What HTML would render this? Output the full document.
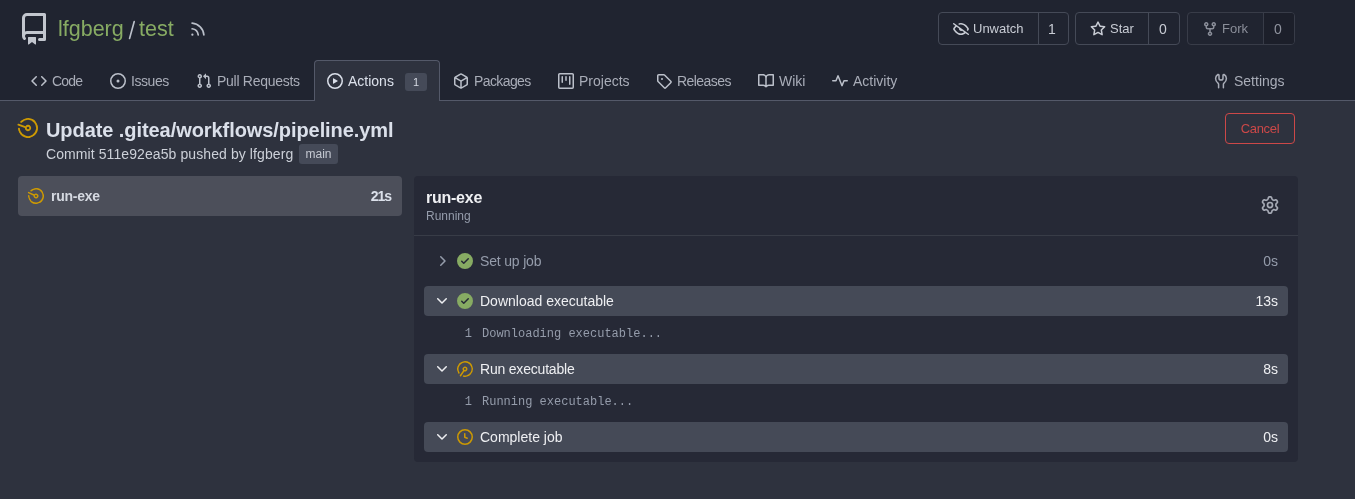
<!DOCTYPE html>
<html>
<head>
<meta charset="utf-8">
<style>
*{box-sizing:border-box;margin:0;padding:0}
html,body{width:1355px;height:499px;overflow:hidden;background:#2e323e;font-family:"Liberation Sans",sans-serif;color:#bbc0ca}
.abs{position:absolute}
.t{position:absolute;white-space:nowrap;line-height:20px;will-change:transform}
svg{position:absolute;display:block}
#hdr{position:absolute;left:0;top:0;width:1355px;height:101px;background:#202430;border-bottom:1px solid #545969}
.btn{position:absolute;border:1px solid #454a57;border-radius:4px;background:#202430}
.btn .div{position:absolute;top:0;bottom:0;width:1px;background:#454a57}
.tab{color:#a9adb8;font-size:14px}
.step{position:absolute;left:424px;width:864px;height:30px;border-radius:4px}
.step.sel{background:#454a57}
.mono{font-family:"Liberation Mono",monospace;font-size:12px;color:#959cab}
</style>
</head>
<body>
<div id="hdr"></div>

<!-- repo icon -->
<svg style="left:18px;top:13px" width="32" height="32" viewBox="0 0 16 16" fill="#c2c6ce"><path d="M2 2.5A2.5 2.5 0 0 1 4.5 0h8.75a.75.75 0 0 1 .75.75v12.5a.75.75 0 0 1-.75.75h-2.5a.75.75 0 0 1 0-1.5h1.75v-2h-8a1 1 0 0 0-.714 1.7.75.75 0 1 1-1.072 1.05A2.495 2.495 0 0 1 2 11.5Zm10.5-1h-8a1 1 0 0 0-1 1v6.708A2.486 2.486 0 0 1 4.5 9h8ZM5 12.25a.25.25 0 0 1 .25-.25h3.5a.25.25 0 0 1 .25.25v3.25a.25.25 0 0 1-.4.2l-1.45-1.087a.249.249 0 0 0-.3 0L5.4 15.7a.25.25 0 0 1-.4-.2Z"/></svg>
<div class="t" style="left:58px;top:17px;font-size:21.5px;line-height:24px;color:#87ab63">lfgberg</div>
<svg style="left:125px;top:18px" width="14" height="24"><line x1="4.6" y1="20.4" x2="9.2" y2="3.6" stroke="#bbc0ca" stroke-width="1.7" stroke-linecap="round"/></svg>
<div class="t" style="left:139px;top:17px;font-size:21.5px;line-height:24px;color:#87ab63">test</div>
<svg style="left:189px;top:20px" width="18" height="18" viewBox="0 0 16 16" fill="#bbc0ca"><path d="M2.002 2.725a.75.75 0 0 1 .797-.699C8.79 2.42 13.58 7.21 13.974 13.201a.75.75 0 0 1-1.497.098 10.502 10.502 0 0 0-9.776-9.776.747.747 0 0 1-.7-.798ZM2.84 7.05h-.002a7.002 7.002 0 0 1 6.113 6.111.75.75 0 0 1-1.49.178 5.503 5.503 0 0 0-4.8-4.8.75.75 0 0 1 .179-1.489ZM2 13a1 1 0 1 1 2 0 1 1 0 0 1-2 0Z"/></svg>

<!-- watch/star/fork -->
<div class="btn" style="left:938px;top:12px;width:131px;height:33px"><div class="div" style="left:99px"></div></div>
<svg style="left:953px;top:21px" width="16" height="16" viewBox="0 0 16 16" fill="#c8ccd4"><path d="M.143 2.31a.75.75 0 0 1 1.047-.167l14.5 10.5a.75.75 0 1 1-.88 1.214l-2.248-1.628C11.346 13.19 9.792 14 8 14c-1.981 0-3.67-.992-4.933-2.078C1.797 10.832.88 9.577.43 8.9a1.619 1.619 0 0 1 0-1.797c.353-.533.995-1.42 1.868-2.305L.31 3.357A.75.75 0 0 1 .143 2.31Zm1.536 5.622A.12.12 0 0 0 1.657 8c0 .021.006.045.022.068.412.621 1.242 1.75 2.366 2.717C5.175 11.758 6.527 12.5 8 12.5c1.195 0 2.31-.488 3.29-1.191L9.063 9.695A2 2 0 0 1 6.058 7.52L3.529 5.688a14.207 14.207 0 0 0-1.85 2.244ZM8 3.5c-.516 0-1.017.09-1.499.251a.75.75 0 1 1-.473-1.423A6.207 6.207 0 0 1 8 2c1.981 0 3.67.992 4.933 2.078 1.27 1.091 2.187 2.345 2.637 3.023a1.62 1.62 0 0 1 0 1.798c-.11.166-.248.365-.41.587a.75.75 0 1 1-1.21-.887c.148-.201.272-.382.371-.53a.119.119 0 0 0 0-.137c-.412-.621-1.242-1.75-2.366-2.717C10.825 4.242 9.473 3.5 8 3.5Z"/></svg>
<div class="t" style="left:973px;top:19px;font-size:13px;color:#c8ccd4">Unwatch</div>
<div class="t" style="left:1047.5px;top:18.5px;font-size:14px;color:#c8ccd4">1</div>

<div class="btn" style="left:1075px;top:12px;width:105px;height:33px"><div class="div" style="left:72px"></div></div>
<svg style="left:1090px;top:21px" width="16" height="16" viewBox="0 0 16 16" fill="#c8ccd4"><path d="M8 .25a.75.75 0 0 1 .673.418l1.882 3.815 4.21.612a.75.75 0 0 1 .416 1.279l-3.046 2.97.719 4.192a.751.751 0 0 1-1.088.791L8 12.347l-3.766 1.98a.75.75 0 0 1-1.088-.79l.72-4.194L.818 6.374a.75.75 0 0 1 .416-1.28l4.21-.611L7.327.668A.75.75 0 0 1 8 .25Zm0 2.445L6.615 5.5a.75.75 0 0 1-.564.41l-3.097.45 2.24 2.184a.75.75 0 0 1 .216.664l-.528 3.084 2.769-1.456a.75.75 0 0 1 .698 0l2.77 1.456-.53-3.084a.75.75 0 0 1 .216-.664l2.24-2.183-3.096-.45a.75.75 0 0 1-.564-.41L8 2.694Z"/></svg>
<div class="t" style="left:1110px;top:19px;font-size:13px;color:#c8ccd4">Star</div>
<div class="t" style="left:1159px;top:18.5px;font-size:14px;color:#c8ccd4">0</div>

<div class="btn" style="left:1187px;top:12px;width:108px;height:33px;border-color:#383c48"><div class="abs" style="left:75px;top:0;right:0;bottom:0;background:#1c1f2a;border-radius:0 3px 3px 0"></div><div class="div" style="left:75px;background:#383c48"></div></div>
<svg style="left:1202px;top:21px" width="16" height="16" viewBox="0 0 16 16" fill="#8a8e99"><path d="M5 5.372v.878c0 .414.336.75.75.75h4.5a.75.75 0 0 0 .75-.75v-.878a2.25 2.25 0 1 1 1.5 0v.878a2.25 2.25 0 0 1-2.25 2.25h-1.5v2.128a2.251 2.251 0 1 1-1.5 0V8.5h-1.5A2.25 2.25 0 0 1 3.5 6.25v-.878a2.25 2.25 0 1 1 1.5 0ZM5 3.25a.75.75 0 1 0-1.5 0 .75.75 0 0 0 1.5 0Zm6.75.75a.75.75 0 1 0 0-1.5.75.75 0 0 0 0 1.5Zm-3 8.75a.75.75 0 1 0-1.5 0 .75.75 0 0 0 1.5 0Z"/></svg>
<div class="t" style="left:1222px;top:19px;font-size:13px;color:#8a8e99">Fork</div>
<div class="t" style="left:1274px;top:18.5px;font-size:14px;color:#8f939e">0</div>

<!-- tabs -->
<div class="abs" style="left:314px;top:60px;width:126px;height:41px;background:#2e323e;border:1px solid #545969;border-bottom:none;border-radius:4px 4px 0 0"></div>

<svg style="left:31px;top:73px" width="16" height="16" viewBox="0 0 16 16" fill="#bbc0ca"><path d="m11.28 3.22 4.25 4.25a.75.75 0 0 1 0 1.06l-4.25 4.25a.749.749 0 0 1-1.275-.326.749.749 0 0 1 .215-.734L13.94 8l-3.72-3.72a.749.749 0 0 1 .326-1.275.749.749 0 0 1 .734.215Zm-6.56 0a.751.751 0 0 1 1.042.018.751.751 0 0 1 .018 1.042L2.06 8l3.72 3.72a.749.749 0 0 1-.326 1.275.749.749 0 0 1-.734-.215L.47 8.53a.75.75 0 0 1 0-1.06Z"/></svg>
<div class="t tab" style="left:52px;top:71px;letter-spacing:-0.85px">Code</div>

<svg style="left:110px;top:73px" width="16" height="16" viewBox="0 0 16 16" fill="#bbc0ca"><path d="M8 9.5a1.5 1.5 0 1 0 0-3 1.5 1.5 0 0 0 0 3Z M8 0a8 8 0 1 1 0 16A8 8 0 0 1 8 0ZM1.5 8a6.5 6.5 0 1 0 13 0 6.5 6.5 0 0 0-13 0Z"/></svg>
<div class="t tab" style="left:131px;top:71px;letter-spacing:-0.45px">Issues</div>

<svg style="left:196px;top:73px" width="16" height="16" viewBox="0 0 16 16" fill="#bbc0ca"><path d="M1.5 3.25a2.25 2.25 0 1 1 3 2.122v5.256a2.251 2.251 0 1 1-1.5 0V5.372A2.25 2.25 0 0 1 1.5 3.25Zm5.677-.177L9.573.677A.25.25 0 0 1 10 .854V2.5h1A2.5 2.5 0 0 1 13.5 5v5.628a2.251 2.251 0 1 1-1.5 0V5a1 1 0 0 0-1-1h-1v1.646a.25.25 0 0 1-.427.177L7.177 3.427a.25.25 0 0 1 0-.354ZM3.75 2.5a.75.75 0 1 0 0 1.5.75.75 0 0 0 0-1.5Zm0 9.5a.75.75 0 1 0 0 1.5.75.75 0 0 0 0-1.5Zm8.25.75a.75.75 0 1 0 1.5 0 .75.75 0 0 0-1.5 0Z"/></svg>
<div class="t tab" style="left:217px;top:71px;letter-spacing:-0.28px">Pull Requests</div>

<svg style="left:327px;top:73px" width="16" height="16" viewBox="0 0 16 16" fill="#dbe0ea"><path d="M8 0a8 8 0 1 1 0 16A8 8 0 0 1 8 0ZM1.5 8a6.5 6.5 0 1 0 13 0 6.5 6.5 0 0 0-13 0Zm4.879-2.773 4.264 2.559a.25.25 0 0 1 0 .428l-4.264 2.559A.25.25 0 0 1 6 10.559V5.442a.25.25 0 0 1 .379-.215Z"/></svg>
<div class="t tab" style="left:348px;top:71px;color:#dbe0ea">Actions</div>
<div class="abs" style="left:405px;top:73px;width:22px;height:18px;background:#454a58;border-radius:3px"></div>
<div class="t" style="left:405px;top:72px;width:22px;text-align:center;font-size:11px;color:#d5d9e2">1</div>

<svg style="left:453px;top:73px" width="16" height="16" viewBox="0 0 16 16" fill="#bbc0ca"><path d="m8.878.392 5.25 3.045c.54.314.872.89.872 1.514v6.098a1.75 1.75 0 0 1-.872 1.514l-5.25 3.045a1.75 1.75 0 0 1-1.756 0l-5.25-3.045A1.75 1.75 0 0 1 1 11.049V4.951c0-.624.332-1.201.872-1.514L7.122.392a1.75 1.75 0 0 1 1.756 0ZM7.875 1.69l-4.63 2.685L8 7.133l4.755-2.758-4.63-2.685a.248.248 0 0 0-.25 0ZM2.5 5.677v5.372c0 .09.047.171.125.216l4.625 2.683V8.432Zm6.25 8.271 4.625-2.683a.25.25 0 0 0 .125-.216V5.677L8.75 8.432Z"/></svg>
<div class="t tab" style="left:474px;top:71px;letter-spacing:-0.6px">Packages</div>

<svg style="left:558px;top:73px" width="16" height="16" viewBox="0 0 16 16" fill="#bbc0ca"><path d="M1.75 0h12.5C15.216 0 16 .784 16 1.75v12.5A1.75 1.75 0 0 1 14.25 16H1.75A1.75 1.75 0 0 1 0 14.25V1.75C0 .784.784 0 1.75 0ZM1.5 1.75v12.5c0 .138.112.25.25.25h12.5a.25.25 0 0 0 .25-.25V1.75a.25.25 0 0 0-.25-.25H1.75a.25.25 0 0 0-.25.25ZM11.75 3a.75.75 0 0 1 .75.75v7.5a.75.75 0 0 1-1.5 0v-7.5a.75.75 0 0 1 .75-.75Zm-8.25.75a.75.75 0 0 1 1.5 0v5.5a.75.75 0 0 1-1.5 0ZM8 3a.75.75 0 0 1 .75.75v3.5a.75.75 0 0 1-1.5 0v-3.5A.75.75 0 0 1 8 3Z"/></svg>
<div class="t tab" style="left:579px;top:71px">Projects</div>

<svg style="left:656px;top:73px" width="16" height="16" viewBox="0 0 16 16" fill="#bbc0ca"><path d="M1 7.775V2.75C1 1.784 1.784 1 2.75 1h5.025c.464 0 .91.184 1.238.513l6.25 6.25a1.75 1.75 0 0 1 0 2.474l-5.026 5.026a1.75 1.75 0 0 1-2.474 0l-6.25-6.25A1.752 1.752 0 0 1 1 7.775Zm1.5 0c0 .066.026.13.073.177l6.25 6.25a.25.25 0 0 0 .354 0l5.025-5.025a.25.25 0 0 0 0-.354l-6.25-6.25a.25.25 0 0 0-.177-.073H2.75a.25.25 0 0 0-.25.25ZM6 5a1 1 0 1 1 0 2 1 1 0 0 1 0-2Z"/></svg>
<div class="t tab" style="left:677px;top:71px;letter-spacing:-0.55px">Releases</div>

<svg style="left:758px;top:73px" width="16" height="16" viewBox="0 0 16 16" fill="#bbc0ca"><path d="M0 1.75A.75.75 0 0 1 .75 1h4.253c1.227 0 2.317.59 3 1.501A3.743 3.743 0 0 1 11.006 1h4.245a.75.75 0 0 1 .75.75v10.5a.75.75 0 0 1-.75.75h-4.507a2.25 2.25 0 0 0-1.591.659l-.622.621a.75.75 0 0 1-1.06 0l-.622-.621A2.25 2.25 0 0 0 5.258 13H.75a.75.75 0 0 1-.75-.75Zm7.251 10.324.004-5.073-.002-2.253A2.25 2.25 0 0 0 5.003 2.5H1.5v9h3.757a3.75 3.75 0 0 1 1.994.574ZM8.755 4.75l-.004 7.322a3.752 3.752 0 0 1 1.992-.572H14.5v-9h-3.495a2.25 2.25 0 0 0-2.25 2.25Z"/></svg>
<div class="t tab" style="left:779px;top:71px">Wiki</div>

<svg style="left:832px;top:73px" width="16" height="16" viewBox="0 0 16 16" fill="#bbc0ca"><path d="M6 2c.306 0 .582.187.696.471L10 10.731l1.304-3.26A.751.751 0 0 1 12 7h3.25a.75.75 0 0 1 0 1.5h-2.742l-1.812 4.528a.751.751 0 0 1-1.392 0L6 4.77 4.696 8.03A.75.75 0 0 1 4 8.5H.75a.75.75 0 0 1 0-1.5h2.742l1.812-4.529A.751.751 0 0 1 6 2Z"/></svg>
<div class="t tab" style="left:853px;top:71px">Activity</div>

<svg style="left:1213px;top:73px" width="16" height="16" viewBox="0 0 16 16" fill="none" stroke="#a9adb8" stroke-width="1.5" stroke-linecap="round" stroke-linejoin="round"><path d="M5.6 14.8V11.2C5.6 10.6 5.3 10.2 4.8 9.8C3.4 8.8 2.6 7.3 2.6 5.6C2.6 3.8 3.5 2.3 4.9 1.5C5.4 1.3 6 1.6 6 2.2V5.2C6 6.3 6.9 7.1 8 7.1C9.1 7.1 10 6.3 10 5.2V2.2C10 1.6 10.6 1.3 11.1 1.5C12.5 2.3 13.4 3.8 13.4 5.6C13.4 7.3 12.6 8.8 11.2 9.8C10.7 10.2 10.4 10.6 10.4 11.2V14.8"/></svg>
<div class="t tab" style="left:1234px;top:71px">Settings</div>

<!-- title -->
<svg style="left:18px;top:118px;transform:rotate(-116deg)" width="20" height="20" viewBox="0 0 16 16" fill="#cc9903"><path d="M8 1.5a6.5 6.5 0 1 0 6.016 4.035.75.75 0 0 1 1.388-.57 8 8 0 1 1-4.37-4.37.75.75 0 0 1-.569 1.389A6.479 6.479 0 0 0 8 1.5Zm6.28.22a.75.75 0 0 1 0 1.06l-4.063 4.064a2.5 2.5 0 1 1-1.06-1.06L13.22 1.72a.75.75 0 0 1 1.06 0ZM8 7a1 1 0 1 0 0 2 1 1 0 0 0 0-2Z"/></svg>
<div class="t" style="left:46px;top:118px;font-size:20px;line-height:24px;font-weight:bold;color:#dbe0ea;letter-spacing:-0.07px">Update .gitea/workflows/pipeline.yml</div>
<div class="t" style="left:46px;top:144px;font-size:14px;color:#ccd0d8;letter-spacing:0.09px">Commit 511e92ea5b pushed by lfgberg</div>
<div class="abs" style="left:299px;top:144px;width:39px;height:20px;background:#454a58;border-radius:3px"></div>
<div class="t" style="left:299px;top:144px;width:39px;text-align:center;font-size:12px;color:#c5c9d2">main</div>

<div class="abs" style="left:1225px;top:113px;width:70px;height:31px;border:1px solid #cc4848;border-radius:4px"></div>
<div class="t" style="left:1225px;top:119px;width:70px;text-align:center;font-size:13px;color:#cc4848;letter-spacing:-0.3px">Cancel</div>

<!-- left job list -->
<div class="abs" style="left:18px;top:176px;width:384px;height:40px;background:#4c4f5a;border-radius:4px"></div>
<svg style="left:28px;top:188px;transform:rotate(-110deg)" width="16" height="16" viewBox="0 0 16 16" fill="#cc9903"><path d="M8 1.5a6.5 6.5 0 1 0 6.016 4.035.75.75 0 0 1 1.388-.57 8 8 0 1 1-4.37-4.37.75.75 0 0 1-.569 1.389A6.479 6.479 0 0 0 8 1.5Zm6.28.22a.75.75 0 0 1 0 1.06l-4.063 4.064a2.5 2.5 0 1 1-1.06-1.06L13.22 1.72a.75.75 0 0 1 1.06 0ZM8 7a1 1 0 1 0 0 2 1 1 0 0 0 0-2Z"/></svg>
<div class="t" style="left:51px;top:186px;font-size:14px;font-weight:bold;color:#d5d9e1;letter-spacing:-0.25px">run-exe</div>
<div class="t" style="left:301px;top:186px;width:90px;text-align:right;font-size:14px;font-weight:bold;color:#dbe0ea;letter-spacing:-1px">21s</div>

<!-- right panel -->
<div class="abs" style="left:414px;top:176px;width:884px;height:286px;background:#262936;border-radius:4px"></div>
<div class="abs" style="left:414px;top:235px;width:884px;height:1px;background:#383c47"></div>
<div class="t" style="left:426px;top:188px;font-size:16px;font-weight:bold;color:#eeeff2;letter-spacing:-0.25px">run-exe</div>
<div class="t" style="left:426px;top:206px;font-size:12px;color:#959cab">Running</div>
<svg style="left:1261px;top:196px" width="18" height="18" viewBox="0 0 16 16" fill="#a6aab5"><path d="M8 0a8.2 8.2 0 0 1 .701.031C9.444.095 9.99.645 10.16 1.29l.288 1.107c.018.066.079.158.212.224.231.114.454.243.668.386.123.082.233.09.299.071l1.103-.303c.644-.176 1.392.021 1.82.63.27.385.506.792.704 1.218.315.675.111 1.422-.364 1.891l-.814.806c-.049.048-.098.147-.088.294.016.257.016.515 0 .772-.01.147.038.246.088.294l.814.806c.475.469.679 1.216.364 1.891a7.977 7.977 0 0 1-.704 1.217c-.428.61-1.176.807-1.82.63l-1.102-.302c-.067-.019-.177-.011-.3.071a5.909 5.909 0 0 1-.668.386c-.133.066-.194.158-.211.224l-.29 1.106c-.168.646-.715 1.196-1.458 1.26a8.006 8.006 0 0 1-1.402 0c-.743-.064-1.289-.614-1.458-1.26l-.289-1.106c-.018-.066-.079-.158-.212-.224a5.738 5.738 0 0 1-.668-.386c-.123-.082-.233-.09-.299-.071l-1.103.303c-.644.176-1.392-.021-1.82-.63a8.12 8.12 0 0 1-.704-1.218c-.315-.675-.111-1.422.363-1.891l.815-.806c.05-.048.098-.147.088-.294a6.214 6.214 0 0 1 0-.772c.01-.147-.038-.246-.088-.294l-.815-.806C.635 6.045.431 5.298.746 4.623a7.92 7.92 0 0 1 .704-1.217c.428-.61 1.176-.807 1.82-.63l1.102.302c.067.019.177.011.3-.071.214-.143.437-.272.668-.386.133-.066.194-.158.211-.224l.29-1.106C6.009.645 6.556.095 7.299.03 7.53.01 7.764 0 8 0Zm-.571 1.525c-.036.003-.108.036-.137.146l-.289 1.105c-.147.561-.549.967-.998 1.189-.173.086-.34.183-.5.29-.417.278-.97.423-1.529.27l-1.103-.303c-.109-.03-.175.016-.195.045-.22.312-.412.644-.573.99-.014.031-.021.11.059.19l.815.806c.411.406.562.957.53 1.456a4.709 4.709 0 0 0 0 .582c.032.499-.119 1.05-.53 1.456l-.815.806c-.081.08-.073.159-.059.19.162.346.353.677.573.989.02.03.085.076.195.046l1.102-.303c.56-.153 1.113-.008 1.53.27.161.107.328.204.501.29.447.222.85.629.997 1.189l.289 1.105c.029.109.101.143.137.146a6.6 6.6 0 0 0 1.142 0c.036-.003.108-.036.137-.146l.289-1.105c.147-.561.549-.967.998-1.189.173-.086.34-.183.5-.29.417-.278.97-.423 1.529-.27l1.103.303c.109.029.175-.016.195-.045.22-.313.411-.644.573-.99.014-.031.021-.11-.059-.19l-.815-.806c-.411-.406-.562-.957-.53-1.456a4.709 4.709 0 0 0 0-.582c-.032-.499.119-1.05.53-1.456l.815-.806c.081-.08.073-.159.059-.19a6.464 6.464 0 0 0-.573-.989c-.02-.03-.085-.076-.195-.046l-1.102.303c-.56.153-1.113.008-1.53-.27a4.44 4.44 0 0 0-.501-.29c-.447-.222-.85-.629-.997-1.189l-.289-1.105c-.029-.11-.101-.143-.137-.146a6.6 6.6 0 0 0-1.142 0ZM11 8a3 3 0 1 1-6 0 3 3 0 0 1 6 0ZM9.5 8a1.5 1.5 0 1 0-3.001.001A1.5 1.5 0 0 0 9.5 8Z"/></svg>

<!-- steps -->
<div class="step" style="top:246px"></div>
<svg style="left:434px;top:253px" width="16" height="16" viewBox="0 0 16 16" fill="#959cab"><path d="M6.22 3.22a.75.75 0 0 1 1.06 0l4.25 4.25a.75.75 0 0 1 0 1.06l-4.25 4.25a.751.751 0 0 1-1.042-.018.751.751 0 0 1-.018-1.042L9.94 8 6.22 4.28a.75.75 0 0 1 0-1.06Z"/></svg>
<svg style="left:457px;top:253px" width="16" height="16" viewBox="0 0 16 16"><circle cx="8" cy="8" r="7.5" fill="#262936"/><path fill="#87ab63" d="M8 16A8 8 0 1 1 8 0a8 8 0 0 1 0 16Zm3.78-9.72a.751.751 0 0 0-.018-1.042.751.751 0 0 0-1.042-.018L6.75 9.19 5.28 7.72a.751.751 0 0 0-1.042.018.751.751 0 0 0-.018 1.042l2 2a.75.75 0 0 0 1.06 0Z"/></svg>
<div class="t" style="left:480px;top:251px;font-size:14px;color:#959cab;letter-spacing:-0.17px">Set up job</div>
<div class="t" style="left:1188px;top:251px;width:90px;text-align:right;font-size:14px;color:#959cab">0s</div>

<div class="step sel" style="top:286px"></div>
<svg style="left:434px;top:293px" width="16" height="16" viewBox="0 0 16 16" fill="#eeeff2"><path d="M12.78 5.22a.749.749 0 0 1 0 1.06l-4.25 4.25a.749.749 0 0 1-1.06 0L3.22 6.28a.749.749 0 0 1 .326-1.275.749.749 0 0 1 .734.215L8 8.94l3.72-3.72a.749.749 0 0 1 1.06 0Z"/></svg>
<svg style="left:457px;top:293px" width="16" height="16" viewBox="0 0 16 16"><circle cx="8" cy="8" r="7.5" fill="#262936"/><path fill="#87ab63" d="M8 16A8 8 0 1 1 8 0a8 8 0 0 1 0 16Zm3.78-9.72a.751.751 0 0 0-.018-1.042.751.751 0 0 0-1.042-.018L6.75 9.19 5.28 7.72a.751.751 0 0 0-1.042.018.751.751 0 0 0-.018 1.042l2 2a.75.75 0 0 0 1.06 0Z"/></svg>
<div class="t" style="left:480px;top:291px;font-size:14px;color:#eeeff2">Download executable</div>
<div class="t" style="left:1188px;top:291px;width:90px;text-align:right;font-size:14px;color:#eeeff2">13s</div>
<div class="t mono" style="left:424px;top:324px;width:48px;text-align:right">1</div>
<div class="t mono" style="left:482px;top:324px">Downloading executable...</div>

<div class="step sel" style="top:354px"></div>
<svg style="left:434px;top:361px" width="16" height="16" viewBox="0 0 16 16" fill="#eeeff2"><path d="M12.78 5.22a.749.749 0 0 1 0 1.06l-4.25 4.25a.749.749 0 0 1-1.06 0L3.22 6.28a.749.749 0 0 1 .326-1.275.749.749 0 0 1 .734.215L8 8.94l3.72-3.72a.749.749 0 0 1 1.06 0Z"/></svg>
<svg style="left:457px;top:361px;transform:rotate(169deg)" width="16" height="16" viewBox="0 0 16 16" fill="#cc9903"><path d="M8 1.5a6.5 6.5 0 1 0 6.016 4.035.75.75 0 0 1 1.388-.57 8 8 0 1 1-4.37-4.37.75.75 0 0 1-.569 1.389A6.479 6.479 0 0 0 8 1.5Zm6.28.22a.75.75 0 0 1 0 1.06l-4.063 4.064a2.5 2.5 0 1 1-1.06-1.06L13.22 1.72a.75.75 0 0 1 1.06 0ZM8 7a1 1 0 1 0 0 2 1 1 0 0 0 0-2Z"/></svg>
<div class="t" style="left:480px;top:359px;font-size:14px;color:#eeeff2;letter-spacing:-0.2px">Run executable</div>
<div class="t" style="left:1188px;top:359px;width:90px;text-align:right;font-size:14px;color:#eeeff2">8s</div>
<div class="t mono" style="left:424px;top:392px;width:48px;text-align:right">1</div>
<div class="t mono" style="left:482px;top:392px">Running executable...</div>

<div class="step sel" style="top:422px"></div>
<svg style="left:434px;top:429px" width="16" height="16" viewBox="0 0 16 16" fill="#eeeff2"><path d="M12.78 5.22a.749.749 0 0 1 0 1.06l-4.25 4.25a.749.749 0 0 1-1.06 0L3.22 6.28a.749.749 0 0 1 .326-1.275.749.749 0 0 1 .734.215L8 8.94l3.72-3.72a.749.749 0 0 1 1.06 0Z"/></svg>
<svg style="left:457px;top:429px" width="16" height="16" viewBox="0 0 16 16" fill="#cc9903"><path d="M8 0a8 8 0 1 1 0 16A8 8 0 0 1 8 0ZM1.5 8a6.5 6.5 0 1 0 13 0 6.5 6.5 0 0 0-13 0Zm7-3.25v2.992l2.028.812a.75.75 0 0 1-.557 1.392l-2.5-1A.751.751 0 0 1 7 8.25v-3.5a.75.75 0 0 1 1.5 0Z"/></svg>
<div class="t" style="left:480px;top:427px;font-size:14px;color:#eeeff2">Complete job</div>
<div class="t" style="left:1188px;top:427px;width:90px;text-align:right;font-size:14px;color:#eeeff2">0s</div>

</body>
</html>
